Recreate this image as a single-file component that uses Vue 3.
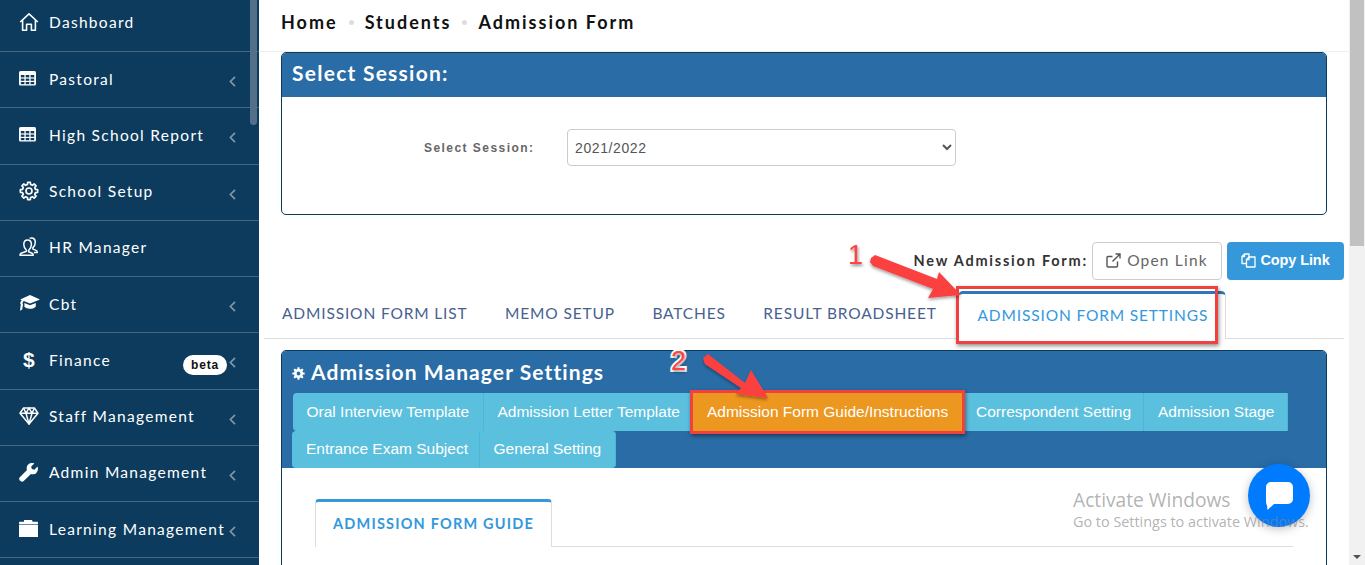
<script setup>
function gear(teeth, ro, ri, cx = 12, cy = 12) {
  const pts = []
  const step = (Math.PI * 2) / teeth
  for (let i = 0; i < teeth; i++) {
    const a = i * step - Math.PI / 2
    const w = step * 0.2
    const s = step * 0.31
    pts.push([a - s, ri], [a - w, ro], [a + w, ro], [a + s, ri])
  }
  return (
    pts
      .map(([a, r], i) => `${i ? 'L' : 'M'}${(cx + r * Math.cos(a)).toFixed(2)} ${(cy + r * Math.sin(a)).toFixed(2)}`)
      .join(' ') + ' Z'
  )
}
const gearOutline = gear(8, 10.5, 8)
const gearSolid = gear(8, 11.5, 8.5)

const menu = [
  { label: 'Dashboard', icon: 'home' },
  { label: 'Pastoral', icon: 'table', caret: true },
  { label: 'High School Report', icon: 'table', caret: true },
  { label: 'School Setup', icon: 'cog', caret: true },
  { label: 'HR Manager', icon: 'users' },
  { label: 'Cbt', icon: 'cap', caret: true },
  { label: 'Finance', icon: 'dollar', caret: true, beta: true },
  { label: 'Staff Management', icon: 'gem', caret: true },
  { label: 'Admin Management', icon: 'wrench', caret: true },
  { label: 'Learning Management', icon: 'folder', caret: true },
]
const tabs = ['ADMISSION FORM LIST', 'MEMO SETUP', 'BATCHES', 'RESULT BROADSHEET']
const pills = [
  { label: 'Oral Interview Template', cls: 'first' },
  { label: 'Admission Letter Template', cls: 'letter' },
  { label: 'Admission Form Guide/Instructions', cls: 'active' },
  { label: 'Correspondent Setting', cls: 'corr' },
  { label: 'Admission Stage', cls: 'stage' },
  { label: 'Entrance Exam Subject', cls: 'first second' },
  { label: 'General Setting', cls: 'last' },
]
</script>

<template>
  <div class="page">
    <aside class="sidebar">
      <ul class="menu">
        <li v-for="item in menu" :key="item.label" class="row">
          <span class="ico">
            <svg v-if="item.icon === 'home'" width="20" height="20" viewBox="0 0 20 20" fill="none" stroke="#fff" stroke-width="1.6" stroke-linejoin="round">
              <path d="M1.2 10 10 1.8 18.8 10M3.6 8.2V18.2H7.6V12.2H12.4V18.2H16.4V8.2" />
            </svg>
            <svg v-else-if="item.icon === 'table'" width="18" height="15" viewBox="0 0 18 15">
              <rect width="17" height="14.5" rx="1.6" fill="#fff" />
              <g fill="#0c3b5e">
                <rect x="1.8" y="4" width="3.6" height="2.4" />
                <rect x="6.7" y="4" width="3.6" height="2.4" />
                <rect x="11.6" y="4" width="3.6" height="2.4" />
                <rect x="1.8" y="7.6" width="3.6" height="2.2" />
                <rect x="6.7" y="7.6" width="3.6" height="2.2" />
                <rect x="11.6" y="7.6" width="3.6" height="2.2" />
                <rect x="1.8" y="11" width="3.6" height="2.2" />
                <rect x="6.7" y="11" width="3.6" height="2.2" />
                <rect x="11.6" y="11" width="3.6" height="2.2" />
              </g>
            </svg>
            <svg v-else-if="item.icon === 'cog'" width="20" height="20" viewBox="0 0 24 24" fill="none" stroke="#fff" stroke-width="2" stroke-linejoin="round">
              <path :d="gearOutline" />
              <circle cx="12" cy="12" r="3.6" />
            </svg>
            <svg v-else-if="item.icon === 'users'" width="20" height="20" viewBox="0 0 20 20" fill="none" stroke="#fff" stroke-width="1.5" stroke-linejoin="round">
              <path d="M7.5 13.2C5.6 11.6 4.8 9.6 4.8 7.4 4.8 4.6 6.3 3 8.6 3s3.8 1.6 3.8 4.4c0 2.2-.8 4.2-2.7 5.8v1.6l3.4 1.4c.7.3 1.1 1 1.1 2H1c0-1 .4-1.7 1.1-2l5.4-2z" />
              <path d="M10.6 1.3c.6-.3 1.2-.4 1.8-.4 2.4 0 3.9 1.6 3.9 4.3 0 2-.7 3.9-2.4 5.4v1.5l3.2 1.3c.8.3 1.2 1 1.2 2h-3.4" />
            </svg>
            <svg v-else-if="item.icon === 'cap'" width="21" height="17" viewBox="0 0 21 17" fill="#fff">
              <path d="M11 0 21 4.4 11 8.6 4.8 6C4 6.6 3.6 7.4 3.5 8.4L4 9.4 3.2 14.6 1 15.8l.8-6.4-.6-.8c.1-1.4.6-2.6 1.6-3.4L1.2 4.4z" />
              <path d="M5.4 8 11 10.2 16.8 8v3.4c-1.2 1.6-3.2 2.3-5.8 2.3s-4.4-.7-5.6-2z" />
            </svg>
            <span v-else-if="item.icon === 'dollar'" class="dollar">$</span>
            <svg v-else-if="item.icon === 'gem'" width="20" height="18" viewBox="0 0 20 18" fill="none" stroke="#fff" stroke-width="1.5" stroke-linejoin="round">
              <path d="M4.6 1H15.4L19 6.2 10 17 1 6.2z" />
              <path d="M1 6.2H19M4.6 1 7 6.2 10 17 13 6.2 15.4 1M7 6.2 10 1l3 5.2" />
            </svg>
            <svg v-else-if="item.icon === 'wrench'" width="19" height="19" viewBox="0 0 19 19" fill="#fff">
              <path d="M18.5 3.6 15.4 6.7 12.8 6.1 12.2 3.5 15.3.5C12.9-.4 10.3.2 9 1.7 7.7 3.1 7.3 5.2 8 7L.8 14.2c-.9.9-.9 2.3 0 3.2l.7.7c.9.9 2.3.9 3.2 0L12 11c1.8.7 3.9.3 5.3-1.1 1.5-1.5 2.1-4 1.2-6.3z" />
            </svg>
            <svg v-else width="19" height="17" viewBox="0 0 19 17" fill="#fff">
              <path d="M5 0H13L14 3H5z" />
              <rect y="1.8" width="19" height="2.4" rx=".4" />
              <rect y="4.8" width="19" height="12.2" />
            </svg>
          </span>
          <span class="label">{{ item.label }}</span>
          <span v-if="item.beta" class="beta">beta</span>
          <svg v-if="item.caret" class="caret" width="7" height="11" viewBox="0 0 7 11" fill="none" stroke="#7d97aa" stroke-width="1.7">
            <path d="M6 .8 1.4 5.5 6 10.2" />
          </svg>
        </li>
      </ul>
      <div class="side-thumb"></div>
    </aside>

    <main class="main">
      <nav class="crumbs">
        <span>Home</span><i></i><span>Students</span><i></i><span>Admission Form</span>
      </nav>

      <section class="card session">
        <h2 class="card-head">Select Session:</h2>
        <div class="session-body">
          <label class="session-label" for="sess">Select Session:</label>
          <select id="sess" class="session-select">
            <option>2021/2022</option>
          </select>
        </div>
      </section>

      <div class="link-row">
        <strong>New Admission Form:</strong>
        <button class="btn open">
          <svg width="15" height="15" viewBox="0 0 15 15" fill="none" stroke="#555" stroke-width="1.4">
            <path d="M11.5 8.5V13a1 1 0 0 1-1 1H2a1 1 0 0 1-1-1V4.5a1 1 0 0 1 1-1h4.5" />
            <path d="M9.5 1H14V5.5M14 1 6.5 8.5" />
          </svg>
          Open Link
        </button>
        <button class="btn copy">
          <svg width="15" height="15" viewBox="0 0 15 15" fill="none" stroke="#fff" stroke-width="1.3" stroke-linejoin="round">
            <path d="M5 10.5H1V3.5L3.5 1H8V4" />
            <path d="M5.5 6.5 8 4H14V14H5.5z" />
            <path d="M3.5 1V3.5H1M8 4V6.5H5.5" />
          </svg>
          Copy Link
        </button>
      </div>

      <div class="tabs">
        <a v-for="t in tabs" :key="t" class="tab">{{ t }}</a>
        <a class="tab current">ADMISSION FORM SETTINGS</a>
      </div>

      <section class="card manager">
        <header class="manager-head">
          <h2 class="manager-title">
            <svg width="13" height="13" viewBox="0 0 24 24">
              <path fill="#fff" fill-rule="evenodd" :d="gearSolid + ' M12 8.5a3.5 3.5 0 1 0 0 7 3.5 3.5 0 0 0 0-7z'" />
            </svg>
            Admission Manager Settings
          </h2>
          <div class="pills">
            <a v-for="p in pills" :key="p.label" class="pill" :class="p.cls">{{ p.label }}</a>
          </div>
        </header>
        <div class="manager-body">
          <div class="guide-tabs"><a class="guide-tab">ADMISSION FORM GUIDE</a></div>
        </div>
      </section>
    </main>

    <div class="scrollbar">
      <div class="scroll-thumb"></div>
      <span class="scroll-down"></span>
    </div>

    <!-- screenshot annotations lying over the page -->
    <div class="mark mark-one"></div>
    <div class="mark mark-two"></div>
    <svg class="arrows" width="1365" height="565" viewBox="0 0 1365 565">
      <defs>
        <filter id="sh" x="-20%" y="-20%" width="140%" height="140%">
          <feDropShadow dx="0" dy="2" stdDeviation="1.5" flood-color="#000" flood-opacity=".35" />
        </filter>
      </defs>
      <g fill="#fb4141" filter="url(#sh)">
        <path d="M871 258 875 255 937 279 939 272 961 295 928 298 933 289 873 266 870 262z" />
        <path d="M703 358 708 354 745 383 751 370 768 398 736 394 741 388 705 364z" />
      </g>
    </svg>
    <span class="num num-one">1</span>
    <span class="num num-two">2</span>

    <button class="chat" aria-label="Chat">
      <svg width="29" height="30" viewBox="0 0 29 30" fill="#fff">
        <path d="M6 1H23a5 5 0 0 1 5 5V18a5 5 0 0 1-5 5H9L2.5 29 2 24.5C1.5 23.5 1 22 1 20V6A5 5 0 0 1 6 1z" />
      </svg>
    </button>
    <div class="watermark">
      <div class="wm-big">Activate Windows</div>
      <div class="wm-small">Go to Settings to activate Windows.</div>
    </div>
  </div>
</template>

<style>
html,
body {
  margin: 0;
  overflow: hidden;
}
</style>

<style scoped>
.page {
  position: relative;
  display: flex;
  width: 1365px;
  height: 565px;
  overflow: hidden;
  background: #fff;
  font-family: Lato, "Open Sans", sans-serif;
}

/* sidebar */
.sidebar {
  position: relative;
  flex: 0 0 259px;
  background: #0c3b5e;
  overflow: hidden;
}
.menu {
  list-style: none;
  margin: -4.25px 0 0;
  padding: 0;
}
.row {
  display: flex;
  align-items: center;
  box-sizing: border-box;
  height: 56.25px;
  padding: 0 23px 2px 19px;
  border-bottom: 1px solid #47687f;
  color: #fff;
  font-size: 15.5px;
  letter-spacing: 1.3px;
  white-space: nowrap;
}
.ico {
  flex: 0 0 30px;
  display: flex;
  align-items: center;
  height: 20px;
}
.dollar {
  font: 700 21px "Liberation Sans", sans-serif;
  margin-left: 4px;
  letter-spacing: 0;
}
.label {
  flex: 0 0 auto;
}
.beta {
  margin-left: auto;
  margin-top: 11px;
  box-sizing: border-box;
  width: 44px;
  height: 20px;
  border-radius: 10px;
  background: #fff;
  color: #111;
  font: 700 12px/20px "Liberation Sans", sans-serif;
  letter-spacing: 0.8px;
  text-align: center;
}
.caret {
  flex: 0 0 7px;
  margin-left: auto;
  margin-top: 6px;
}
.beta + .caret {
  margin-left: 2px;
}
.side-thumb {
  position: absolute;
  top: 0;
  left: 250px;
  width: 7px;
  height: 125px;
  border-radius: 0 0 4px 4px;
  background: #53708a;
}

/* main column */
.main {
  flex: 1 1 auto;
  min-width: 0;
}
.crumbs {
  display: flex;
  align-items: center;
  box-sizing: border-box;
  height: 52px;
  padding: 0 0 7px 22px;
  border-bottom: 1px solid #eeeeee;
  color: #111;
  font-size: 18px;
  font-weight: 700;
  letter-spacing: 2px;
}
.crumbs i {
  width: 5px;
  height: 5px;
  margin: 0 11px;
  border-radius: 50%;
  background: #dddddd;
}
.card {
  margin: 0 22px;
  border: 1px solid #0c3b5e;
  border-radius: 5px;
  overflow: hidden;
}
.card-head {
  margin: 0;
  height: 44px;
  padding-left: 10px;
  background: #2a6ca6;
  color: #fff;
  font-size: 21px;
  font-weight: 700;
  line-height: 40px;
  letter-spacing: 1.25px;
}
.session {
  margin-top: 0;
  height: 163px;
  box-sizing: border-box;
}
.session-body {
  display: flex;
  align-items: center;
  padding: 32px 0 0 142px;
}
.session-label {
  width: 143px;
  padding-top: 1px;
  color: #666;
  font: 700 12px "Liberation Sans", sans-serif;
  letter-spacing: 1.45px;
}
.session-select {
  box-sizing: border-box;
  width: 389px;
  height: 37px;
  padding: 0 3px;
  border: 1px solid #ccc;
  border-radius: 4px;
  background: #fff;
  color: #555;
  font: 14px "Liberation Sans", sans-serif;
  letter-spacing: 0.6px;
}
.link-row {
  display: flex;
  align-items: center;
  justify-content: flex-end;
  gap: 5px;
  height: 38px;
  margin: 27px 5px 0 0;
}
.link-row strong {
  margin-right: -1px;
  padding-bottom: 2px;
  color: #333;
  font-size: 14.5px;
  font-weight: 700;
  letter-spacing: 1.78px;
}
.btn {
  display: flex;
  align-items: center;
  justify-content: center;
  gap: 6px;
  box-sizing: border-box;
  height: 38px;
  border-radius: 4px;
  padding: 0 0 2px;
  white-space: nowrap;
}
.open {
  width: 130px;
  border: 1px solid #ccc;
  background: #fff;
  color: #666;
  font: 15.5px Lato, sans-serif;
  letter-spacing: 1.2px;
}
.copy {
  width: 117px;
  border: 0;
  background: #3498db;
  color: #fff;
  font: 700 14.5px "Liberation Sans", sans-serif;
  letter-spacing: -0.1px;
  gap: 4px;
}
.tabs {
  display: flex;
  align-items: flex-end;
  box-sizing: border-box;
  height: 48px;
  margin: 11px 5px 0;
  padding-left: 18px;
  border-bottom: 1px solid #dddddd;
}
.tab {
  margin-right: 37.5px;
  padding-bottom: 16px;
  color: #47618f;
  font-size: 15.5px;
  letter-spacing: 0.85px;
  white-space: nowrap;
}
.tab.current {
  box-sizing: border-box;
  height: 48px;
  width: 268px;
  margin: 0 0 -1px -16.7px;
  padding: 12px 0 0 19px;
  border: 1px solid #dddddd;
  border-top: 3px solid #2a7ab5;
  border-bottom: 0;
  border-radius: 5px 5px 0 0;
  background: #fff;
  color: #3498db;
}
.manager {
  margin-top: 11px;
  height: 300px;
}
.manager-head {
  box-sizing: border-box;
  height: 117px;
  padding: 6px 0 0 10px;
  background: #2a6ca6;
}
.manager-title {
  display: flex;
  align-items: center;
  gap: 6px;
  margin: 0;
  height: 29px;
  color: #fff;
  font-size: 21px;
  font-weight: 700;
  letter-spacing: 1.08px;
  white-space: nowrap;
}
.manager-title svg {
  margin-top: 4px;
}
.pills {
  display: flex;
  flex-wrap: wrap;
  margin-top: 7px;
  padding-left: 1px;
}
.pill {
  box-sizing: border-box;
  height: 38px;
  padding: 0 13.5px;
  background: #5bc0de;
  border-right: 1px solid #46b8da;
  color: #fff;
  font: 15.5px/38px "Liberation Sans", sans-serif;
  white-space: nowrap;
}
.pill.first {
  width: 191px;
  border-radius: 4px 0 0 4px;
}
.pill.second {
  width: 188px;
  margin-left: -1px;
  height: 37px;
  line-height: 36px;
  padding-left: 14px;
}
.pill.last {
  width: 136px;
  height: 37px;
  line-height: 36px;
  border-radius: 0 4px 4px 0;
}
.pill.letter {
  width: 208px;
}
.pill.active {
  width: 272px;
  padding: 0 15px;
  background: #ec971f;
}
.pill.corr {
  width: 180px;
  padding: 0 12px;
}
.pill.stage {
  width: 144px;
  padding: 0 14px;
}
.manager-body {
  padding: 31px 33px 0;
}
.guide-tabs {
  height: 48px;
  box-sizing: border-box;
  border-bottom: 1px solid #dddddd;
}
.guide-tab {
  display: inline-block;
  box-sizing: border-box;
  width: 237px;
  height: 48px;
  padding: 13px 0 0 17px;
  border: 1px solid #dddddd;
  border-top: 3px solid #3498db;
  border-bottom: 0;
  border-radius: 4px 4px 0 0;
  background: #fff;
  color: #3498db;
  font-size: 14.5px;
  font-weight: 700;
  letter-spacing: 1.2px;
  white-space: nowrap;
}

/* page scrollbar */
.scrollbar {
  position: relative;
  flex: 0 0 16px;
  background: #f1f1f1;
}
.scroll-thumb {
  width: 14px;
  height: 246px;
  margin-left: 1px;
  background: #c1c1c1;
}
.scroll-down {
  position: absolute;
  left: 4px;
  bottom: 6px;
  border-left: 4px solid transparent;
  border-right: 4px solid transparent;
  border-top: 4px solid #505050;
}

/* annotations */
.mark {
  position: absolute;
  box-sizing: border-box;
  border: 3px solid #f04040;
  box-shadow: 1px 2px 4px rgba(0, 0, 0, 0.45);
}
.mark-one {
  left: 956px;
  top: 286px;
  width: 262px;
  height: 58px;
}
.mark-two {
  left: 690px;
  top: 390px;
  width: 275px;
  height: 44px;
}
.arrows {
  position: absolute;
  left: 0;
  top: 0;
  pointer-events: none;
}
.num {
  position: absolute;
  color: #f44;
  font: 400 27px "Liberation Sans", sans-serif;
  -webkit-text-stroke: 4px #fff;
  paint-order: stroke fill;
  text-shadow: 1px 2px 3px rgba(0, 0, 0, 0.45);
}
.num-one {
  left: 848px;
  top: 240px;
}
.num-two {
  left: 671px;
  top: 346px;
}
.chat {
  position: absolute;
  left: 1248px;
  top: 464px;
  display: flex;
  align-items: center;
  justify-content: center;
  width: 62px;
  height: 63px;
  padding: 0;
  border: 0;
  border-radius: 50%;
  background: #007bff;
  box-shadow: 0 2px 10px rgba(0, 0, 0, 0.25);
}
.watermark {
  position: absolute;
  left: 1073px;
  top: 487px;
  color: rgba(130, 130, 130, 0.62);
  font-family: "Open Sans", sans-serif;
  white-space: nowrap;
  pointer-events: none;
}
.wm-big {
  font-size: 19.2px;
  line-height: 25px;
}
.wm-small {
  font-size: 14.4px;
  line-height: 20px;
}
</style>
